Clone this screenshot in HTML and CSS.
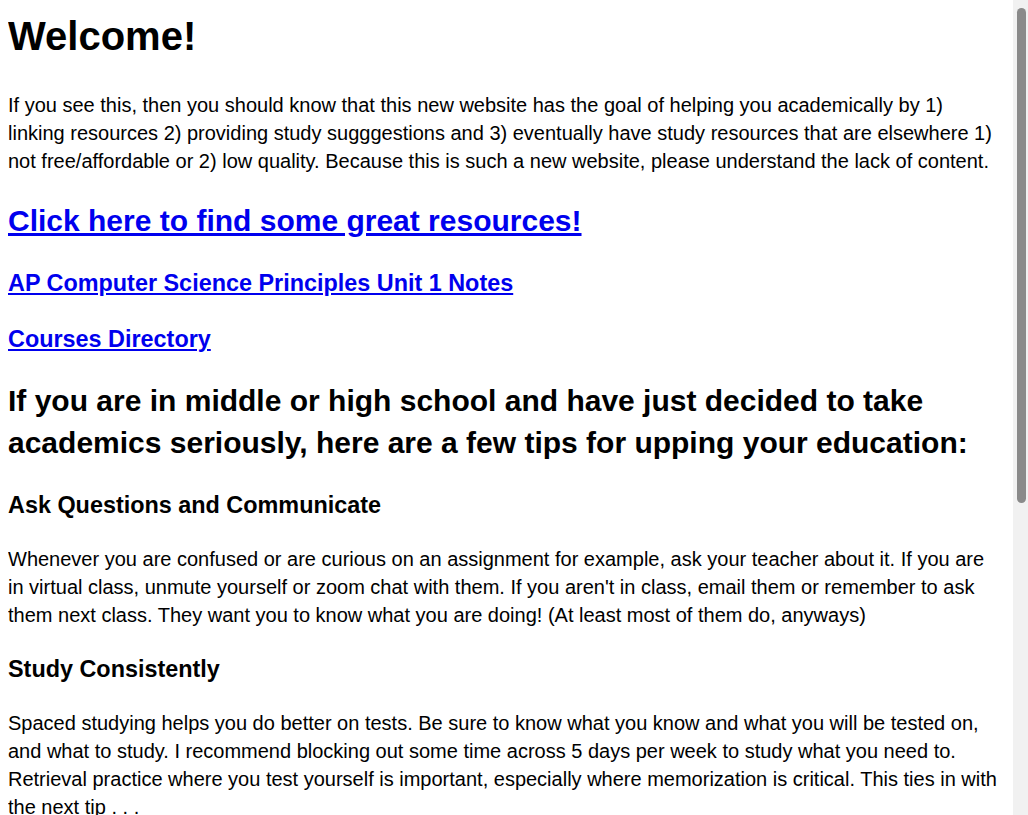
FILE: index.html
```html
<!DOCTYPE html>
<html lang="en">
<head>
<meta charset="utf-8">
<title>Welcome!</title>
<link rel="stylesheet" href="styles.css">
</head>
<body>
<h1 class="title">Welcome!</h1>
<p class="text">If you see this, then you should know that this new website has the goal of helping you academically by 1) linking resources 2) providing study sugggestions and 3) eventually have study resources that are elsewhere 1) not free/affordable or 2) low quality. Because this is such a new website, please understand the lack of content.</p>
<h2 class="big"><a class="link" href="#">Click here to find some great resources!</a></h2>
<h3 class="sub"><a class="link" href="#">AP Computer Science Principles Unit 1 Notes</a></h3>
<h3 class="sub"><a class="link" href="#">Courses Directory</a></h3>
<h2 class="big">If you are in middle or high school and have just decided to take academics seriously, here are a few tips for upping your education:</h2>
<h3 class="sub">Ask Questions and Communicate</h3>
<p class="text">Whenever you are confused or are curious on an assignment for example, ask your teacher about it. If you are in virtual class, unmute yourself or zoom chat with them. If you aren't in class, email them or remember to ask them next class. They want you to know what you are doing! (At least most of them do, anyways)</p>
<h3 class="sub">Study Consistently</h3>
<p class="text">Spaced studying helps you do better on tests. Be sure to know what you know and what you will be tested on, and what to study. I recommend blocking out some time across 5 days per week to study what you need to. Retrieval practice where you test yourself is important, especially where memorization is critical. This ties in with the next tip . . .</p>
<h3 class="sub">Get Enough Sleep</h3>
<p class="text">Sleep is when your brain stores what you learned during the day. Staying up late to cram the night before a test usually hurts more than it helps, so try to keep a regular schedule and get around 8 hours of sleep each night.</p>
<h3 class="sub">Stay Organized</h3>
<p class="text">Keep track of your assignments and due dates in a planner or a calendar. Breaking big projects into smaller pieces makes them much easier to finish on time, and it keeps you from feeling overwhelmed.</p>
<h3 class="sub">Take Care of Yourself</h3>
<p class="text">Eat well, exercise, and take breaks. Your health matters just as much as your grades, and you will learn better when you feel good.</p>
<div class="scrollbar" aria-hidden="true"><div class="thumb"></div></div>
</body>
</html>
```
FILE: styles.css
```css
html {
  background: #ffffff;
}

body {
  margin: 8px 23px 8px 8px;
  font-family: "Liberation Sans", Arial, sans-serif;
  font-size: 20px;
  line-height: 1.4;
  color: #000000;
}

.title {
  font-size: 2em;
  font-weight: bold;
  margin: 0 0 0.67em 0;
}

.text {
  margin: 1em 0;
}

.big {
  font-size: 1.5em;
  font-weight: bold;
  margin: 0.83em 0;
}

.sub {
  font-size: 1.17em;
  font-weight: bold;
  margin: 1em 0;
}

.link {
  color: #0000ee;
  text-decoration: underline;
}

.scrollbar {
  position: fixed;
  top: 0;
  right: 0;
  width: 15px;
  height: 100vh;
  background: #f1f1f1;
}

.thumb {
  position: absolute;
  top: 8px;
  left: 4px;
  width: 9px;
  height: 495px;
  border-radius: 5px;
  background: #8a8a8a;
}
```
